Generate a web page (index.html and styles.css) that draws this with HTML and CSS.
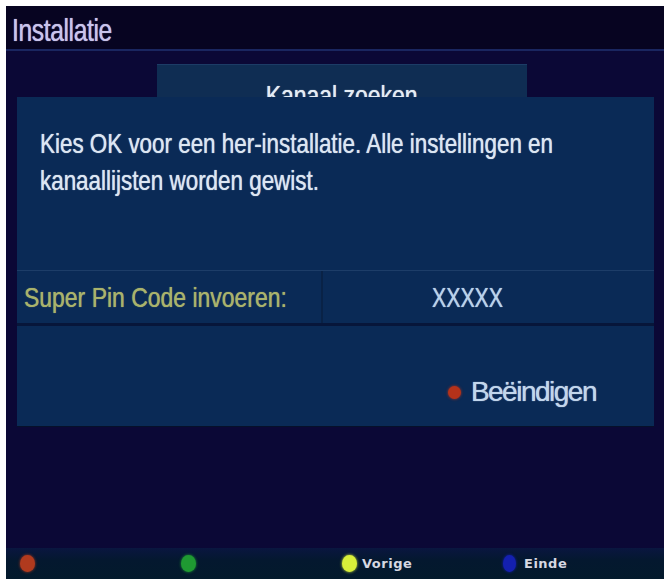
FILE: index.html
```html
<!DOCTYPE html>
<html lang="nl">
<head>
<meta charset="utf-8">
<title>Installatie</title>
<link rel="stylesheet" href="styles.css">
</head>
<body>
<div class="frame">
  <div class="screen">
    <header class="header"><span class="title">Installatie</span></header>
    <main class="main">
      <div class="tab"><span class="tab-label">Kanaal zoeken</span></div>
      <section class="dialog">
        <div class="message">
          <p class="msg-line">Kies OK voor een her-installatie. Alle instellingen en</p>
          <p class="msg-line">kanaallijsten worden gewist.</p>
        </div>
        <div class="pin-row">
          <div class="pin-label"><span class="pin-label-text">Super Pin Code invoeren:</span></div>
          <div class="pin-value"><span class="pin-value-text">XXXXX</span></div>
        </div>
        <div class="actions">
          <span class="dot dot-red"></span><span class="action-label">Beëindigen</span>
        </div>
      </section>
    </main>
    <footer class="keys">
      <div class="key"><span class="kdot k-red"></span></div>
      <div class="key"><span class="kdot k-green"></span></div>
      <div class="key"><span class="kdot k-yellow"></span><span class="klabel">Vorige</span></div>
      <div class="key"><span class="kdot k-blue"></span><span class="klabel">Einde</span></div>
    </footer>
  </div>
</div>
</body>
</html>
```

FILE: styles.css
```css
html, body {
  margin: 0;
  padding: 0;
  background: #ffffff;
}
.frame {
  width: 668px;
  height: 579px;
  padding: 6px 4px 0 6px;
  box-sizing: border-box;
  background: #ffffff;
}
.screen {
  width: 658px;
  height: 573px;
  display: flex;
  flex-direction: column;
  background: #0b0836;
  overflow: hidden;
  font-family: "Liberation Sans", Arial, sans-serif;
}
.header {
  background: #070421;
  border-bottom: 2px solid #1a2660;
  display: flex;
  align-items: center;
  padding: 5px 0 0 6px;
  height: 38px;
  flex: none;
}
.title {
  display: inline-block;
  color: #c9c4ec;
  font-size: 32px;
  letter-spacing: -0.5px;
  transform: scaleX(0.77);
  transform-origin: left center;
  text-shadow: 0 0 1px #c9c4ec;
}
.main {
  flex: 1;
  display: flex;
  flex-direction: column;
}
.tab {
  margin: 13px 0 0 151px;
  width: 370px;
  height: 33px;
  background: #0f2d53;
  border-top: 1px solid #1c3c66;
  box-sizing: border-box;
  overflow: hidden;
  text-align: center;
}
.tab-label {
  display: inline-block;
  padding-top: 16px;
  color: #e4ecf4;
  font-size: 28px;
  line-height: 30px;
  transform: scaleX(0.82);
  transform-origin: center;
  text-shadow: 0 0 1px #e4ecf4;
}
.dialog {
  margin-left: 11px;
  width: 637px;
  height: 329px;
  background: #0a2a56;
  display: flex;
  flex-direction: column;
  box-shadow: 0 1px 0 #06102a;
}
.message {
  height: 173px;
  box-sizing: border-box;
  padding: 28px 0 0 23px;
}
.msg-line {
  margin: 0;
  color: #dce6f2;
  font-size: 28px;
  line-height: 37px;
  white-space: nowrap;
  transform: scaleX(0.8);
  transform-origin: left center;
  text-shadow: 0 0 1px #dce6f2;
}
.pin-row {
  height: 56px;
  display: grid;
  grid-template-columns: 306px 1fr;
  border-top: 1px solid #1d3d68;
  border-bottom: 3px solid #07163a;
  box-sizing: border-box;
}
.pin-label {
  display: flex;
  align-items: center;
  padding: 2px 0 0 7px;
  border-right: 2px solid #092246;
}
.pin-label-text {
  display: inline-block;
  color: #a9b36c;
  font-size: 28px;
  white-space: nowrap;
  transform: scaleX(0.82);
  transform-origin: left center;
  text-shadow: 0 0 1px #a9b36c;
}
.pin-value {
  display: flex;
  align-items: center;
  padding: 2px 0 0 109px;
}
.pin-value-text {
  display: inline-block;
  color: #b9d2ea;
  font-size: 28px;
  transform: scaleX(0.76);
  transform-origin: left center;
  text-shadow: 0 0 1px #b9d2ea;
}
.actions {
  flex: 1;
  display: flex;
  align-items: center;
  justify-content: flex-end;
  padding: 32px 58px 0 0;
}
.dot {
  width: 13px;
  height: 13px;
  border-radius: 50%;
  margin-right: 10px;
}
.dot-red {
  background: #b4321a;
  box-shadow: 0 0 3px #b4321a;
}
.action-label {
  color: #c2d6ec;
  font-size: 28px;
  letter-spacing: -1.5px;
  text-shadow: 0 0 1px #c2d6ec;
}
.keys {
  height: 31px;
  flex: none;
  display: grid;
  grid-template-columns: 161px 161px 161px 175px;
  align-items: center;
  background: linear-gradient(#0a1640, #04182f 40%, #031a2c);
  padding-left: 14px;
  box-sizing: border-box;
}
.key {
  display: flex;
  align-items: center;
}
.kdot {
  width: 15px;
  height: 17px;
  border-radius: 50%;
  margin-right: 5px;
}
.k-red { background: #b03a1e; box-shadow: 0 0 3px #b03a1e; }
.k-green { background: #1f9a32; box-shadow: 0 0 3px #1f9a32; }
.k-yellow { background: #d8ef3a; box-shadow: 0 0 3px #d8ef3a; }
.k-blue { background: #1420b0; box-shadow: 0 0 3px #1420b0; width: 13px; margin-right: 8px; }
.klabel {
  color: #d6d8e2;
  font-family: "DejaVu Sans", Verdana, sans-serif;
  font-weight: bold;
  font-size: 13px;
  letter-spacing: 0.5px;
}
```
